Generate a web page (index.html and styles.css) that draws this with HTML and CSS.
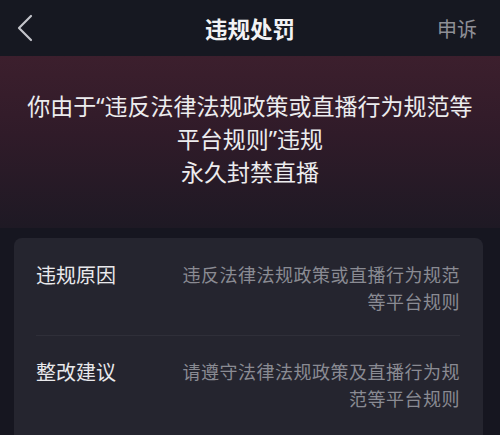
FILE: index.html
```html
<!DOCTYPE html>
<html lang="zh-CN">
<head>
  <meta charset="UTF-8">
  <title>违规处罚</title>
  <link rel="stylesheet" href="styles.css">
</head>
<body>

  <div class="navbar">
    <div class="nav-left">
      <svg class="back" width="18" height="28" viewBox="0 0 18 28">
        <path d="M15 2 L3 14 L15 26" fill="none" stroke="#c3c4ca" stroke-width="2.2" stroke-linecap="round" stroke-linejoin="round"/>
      </svg>
    </div>
    <h1 class="title">违规处罚</h1>
    <div class="nav-right">申诉</div>
  </div>

  <div class="banner">
    <p>你由于“违反法律法规政策或直播行为规范等平台规则”违规<br>永久封禁直播</p>
  </div>

  <div class="card">
    <div class="row">
      <div class="label">违规原因</div>
      <div class="value">违反法律法规政策或直播行为规范等平台规则</div>
    </div>
    <div class="row">
      <div class="label">整改建议</div>
      <div class="value">请遵守法律法规政策及直播行为规范等平台规则</div>
    </div>
  </div>

</body>
</html>
```

FILE: styles.css
```css
body {
  margin: 0;
  background: #161620;
  font-family: "Noto Sans CJK SC", "Noto Sans", sans-serif;
  color: #fff;
  overflow: hidden;
}

.navbar {
  height: 56px;
  display: grid;
  grid-template-columns: 1fr auto 1fr;
  align-items: center;
  background: #161821;
}

.nav-left {
  padding-left: 16px;
  display: flex;
  align-items: center;
}

.title {
  margin: 0;
  font-size: 22.5px;
  font-weight: bold;
  color: #f2f2f4;
}

.nav-right {
  justify-self: end;
  padding-right: 23px;
  font-size: 20px;
  color: #8e8f96;
}

.banner {
  height: 172px;
  padding-top: 34px;
  box-sizing: border-box;
  background: linear-gradient(to bottom, #3c1f2d 0%, #301b29 45%, #1e1924 100%);
  text-align: center;
}

/* latin font first so the quotes stay narrow */
.banner p {
  margin: 0;
  font-family: "Noto Sans", "Noto Sans CJK SC", sans-serif;
  font-size: 23px;
  line-height: 33px;
  color: #ececee;
  padding: 0 24px;
}

.card {
  margin: 10px 17px 0 14px;
  background: #25252f;
  border-radius: 8px 8px 0 0;
  padding: 0 23px 0 22px;
  height: 200px;
}

.row {
  display: flex;
  justify-content: space-between;
  padding: 22px 0 20px;
  line-height: 27px;
}

.row:first-child {
  padding-top: 23px;
  border-bottom: 1px solid #2f2f39;
}

.label {
  font-size: 20px;
  color: #e9e9ec;
}

.value {
  width: 280px;
  font-size: 18px;
  letter-spacing: 0.5px;
  text-align: right;
  color: #8a8b93;
}
```
